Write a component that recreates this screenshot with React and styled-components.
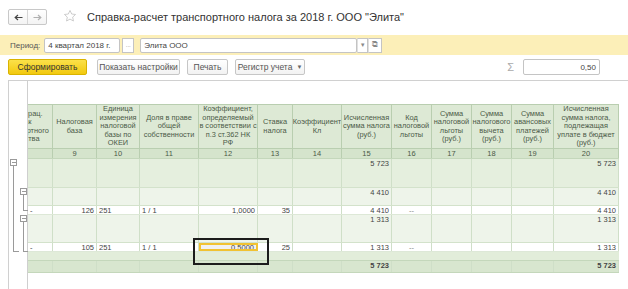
import React from "react";
import styled, { createGlobalStyle } from "styled-components";

const GlobalStyle = createGlobalStyle`
  html, body { margin: 0; padding: 0; background: #fff; }
  body { font-family: "Liberation Sans", Arial, sans-serif; color: #333; }
  * { box-sizing: border-box; }
`;

const Page = styled.div`
  position: relative;
  width: 628px;
  height: 289px;
  overflow: hidden;
  background: #fff;
  display: flex;
  flex-direction: column;
`;

// Title row
const TitleBar = styled.div`
  height: 37px;
  display: flex;
  align-items: flex-start;
  padding: 9px 0 0 8px;
`;

const NavGroup = styled.div`
  display: flex;
  width: 39px;
  height: 16px;
  border: 1px solid #c8c8c8;
  border-radius: 2px;
  background: linear-gradient(#fff, #f3f3f3);
`;

const NavButton = styled.div`
  flex: 1;
  display: flex;
  align-items: center;
  justify-content: center;
  color: ${(p) => (p.$disabled ? "#b0b0b0" : "#444")};
  & + & { border-left: 1px solid #d6d6d6; }
`;

const Star = styled.svg`
  margin: 0 0 0 16px;
  width: 14px;
  height: 14px;
`;

const Title = styled.div`
  margin-left: 10px;
  font-size: 11px;
  line-height: 16px;
  color: #333;
`;

// Parameters band
const ParamBar = styled.div`
  height: 21px;
  background: #fcefb8;
  display: flex;
  align-items: center;
  padding-left: 10px;
  font-size: 8px;
  color: #555;
`;

const Label = styled.span`
  margin-right: 4px;
`;

const Input = styled.div`
  height: 15px;
  width: ${(p) => p.$w}px;
  background: #fff;
  border: 1px solid #c4c4c4;
  border-radius: 2px;
  padding: 0 3px;
  display: flex;
  align-items: center;
  justify-content: ${(p) => (p.$right ? "flex-end" : "flex-start")};
  font-size: 8px;
  color: #444;
`;

const SmallBtn = styled.div`
  height: 15px;
  width: ${(p) => p.$w}px;
  margin-left: ${(p) => p.$ml || 0}px;
  background: #fff;
  border: 1px solid #c4c4c4;
  border-left-color: ${(p) => (p.$joined ? "#e0e0e0" : "#c4c4c4")};
  display: flex;
  align-items: center;
  justify-content: center;
  font-size: 6px;
  color: #888;
`;

// Command bar
const Toolbar = styled.div`
  margin-top: 4px;
  height: 17px;
  display: flex;
  align-items: center;
  padding: 0 28px 0 8px;
`;

const Button = styled.div`
  height: 16px;
  width: ${(p) => p.$w}px;
  margin-right: ${(p) => p.$mr || 7}px;
  border: 1px solid ${(p) => (p.$primary ? "#d9b300" : "#c6c6c6")};
  border-radius: 2px;
  background: ${(p) =>
    p.$primary ? "linear-gradient(#fbe14a, #f2c90f)" : "linear-gradient(#fff, #f2f2f2)"};
  display: flex;
  align-items: center;
  justify-content: center;
  gap: 4px;
  font-size: 8.5px;
  color: ${(p) => (p.$primary ? "#333" : "#555")};
  white-space: nowrap;
`;

const Caret = styled.span`
  font-size: 6px;
  color: #666;
`;

const Spacer = styled.div`
  flex: 1;
`;

const Sigma = styled.span`
  font-size: 11px;
  color: #aaa;
  margin-right: 9px;
`;

// Report
const Report = styled.div`
  flex: 1;
  margin: 5px 0 0 8px;
  border-top: 1px solid #d0d0d0;
  border-left: 1px solid #d0d0d0;
  display: flex;
`;

const Gutter = styled.div`
  width: 19px;
  border-right: 1px solid #cfcfcf;
  flex: none;
`;

const Grid = styled.div`
  padding-top: 23px;
  display: flex;
  flex-direction: column;
`;

const COLS = "25px 44px 43px 59px 59px 35px 49px 50px 40px 40px 40px 42px 65px";

const Row = styled.div`
  display: grid;
  grid-template-columns: ${COLS};
  height: ${(p) => p.$h}px;
  background: ${(p) => p.$bg};
  border-bottom: 1px solid ${(p) => p.$line || "#d3e2cb"};
`;

const HeadRow = styled(Row)`
  border-top: 1px solid #b9ceb0;
  border-bottom: 1px solid #b9ceb0;
`;

const HeadCell = styled.div`
  border-right: 1px solid #b9ceb0;
  display: flex;
  align-items: center;
  justify-content: center;
  text-align: center;
  font-size: 7.4px;
  line-height: 8.4px;
  color: #4b5a47;
  white-space: pre-line;
  overflow: hidden;
`;

const Clipped = styled.div`
  flex: none;
  width: 56px;
  margin-left: -32px;
  text-align: center;
`;

const NumCell = styled.div`
  border-right: 1px solid #b9ceb0;
  text-align: center;
  font-size: 7.5px;
  line-height: 9px;
  color: #4b5a47;
`;

const Cell = styled.div`
  border-right: ${(p) => (p.$plain ? "none" : "1px solid #cfdfc8")};
  font-size: 7.5px;
  line-height: 9px;
  padding: 0 2px;
  text-align: ${(p) => p.$align || "right"};
  font-weight: ${(p) => (p.$bold ? "bold" : "normal")};
  color: ${(p) => (p.$muted ? "#888" : "#444")};
  white-space: nowrap;
  overflow: hidden;
`;

const ActiveCell = styled(Cell)`
  border: 2px solid #f1c232;
  background: #f1f1f1;
  line-height: 6px;
`;

const Callout = styled.div`
  position: absolute;
  left: 193px;
  top: 238px;
  width: 76px;
  height: 27px;
  border: 2px solid #1c1c1c;
  pointer-events: none;
`;

const headers = [
  "Регистрац.\nзнак\nтранспортного\nсредства",
  "Налоговая\nбаза",
  "Единица\nизмерения\nналоговой\nбазы по\nОКЕИ",
  "Доля в праве\nобщей\nсобственности",
  "Коэффициент,\nопределяемый\nв соответствии с\nп.3 ст.362 НК\nРФ",
  "Ставка\nналога",
  "Коэффициент\nКл",
  "Исчисленная\nсумма налога\n(руб.)",
  "Код\nналоговой\nльготы",
  "Сумма\nналоговой\nльготы\n(руб.)",
  "Сумма\nналогового\nвычета\n(руб.)",
  "Сумма\nавансовых\nплатежей\n(руб.)",
  "Исчисленная\nсумма налога,\nподлежащая\nуплате в бюджет\n(руб.)",
];

const numbers = ["", "9", "10", "11", "12", "13", "14", "15", "16", "17", "18", "19", "20"];

const empty = (n) => Array.from({ length: n }, () => "");

const GroupRow = ({ h, bg, sum, bold, line }) => {
  const cells = empty(13);
  cells[7] = sum;
  cells[12] = sum;
  return (
    <Row $h={h} $bg={bg} $line={line}>
      {cells.map((c, i) => (
        <Cell key={i} $bold={bold}>
          {c}
        </Cell>
      ))}
    </Row>
  );
};

const DetailRow = ({ base, share, coef, rate, sum, active }) => (
  <Row $h={9} $bg="#fff" $line="#dde8d7">
    <Cell $align="left">-</Cell>
    <Cell>{base}</Cell>
    <Cell $align="left">251</Cell>
    <Cell $align="left">{share}</Cell>
    {active ? <ActiveCell>{coef}</ActiveCell> : <Cell>{coef}</Cell>}
    <Cell>{rate}</Cell>
    <Cell />
    <Cell>{sum}</Cell>
    <Cell $align="center" $muted>
      --
    </Cell>
    <Cell />
    <Cell />
    <Cell />
    <Cell>{sum}</Cell>
  </Row>
);

const Arrow = ({ left }) => (
  <svg width="9" height="7" viewBox="0 0 9 7">
    <path
      d={left ? "M8.5 3.5H1.5M4 1L1.2 3.5 4 6" : "M0.5 3.5H7.5M5 1l2.8 2.5L5 6"}
      fill="none"
      stroke="currentColor"
      strokeWidth="1.2"
    />
  </svg>
);

const Tree = () => (
  <svg width="19" height="204" viewBox="0 0 19 204">
    <g stroke="#9a9a9a" strokeWidth="1" fill="#fff" shapeRendering="crispEdges">
      <path d="M4.5 85 V170.5 H10" fill="none" />
      <path d="M14.5 114 V129.5 H19" fill="none" />
      <path d="M14.5 141 V170.5 H19" fill="none" />
      <rect x="1.5" y="78.5" width="6" height="6" />
      <rect x="11.5" y="107.5" width="6" height="6" />
      <rect x="11.5" y="134.5" width="6" height="6" />
      <path d="M3 81.5 H6.5 M13 110.5 H16.5 M13 137.5 H16.5" fill="none" />
    </g>
  </svg>
);

const App = () => (
  <Page>
    <GlobalStyle />
    <TitleBar>
      <NavGroup>
        <NavButton>
          <Arrow left />
        </NavButton>
        <NavButton $disabled>
          <Arrow />
        </NavButton>
      </NavGroup>
      <Star viewBox="0 0 24 24">
        <path
          d="M12 2.5l2.9 6.1 6.6.8-4.9 4.6 1.3 6.6L12 17.3l-5.9 3.3 1.3-6.6-4.9-4.6 6.6-.8z"
          fill="none"
          stroke="#bdbdbd"
          strokeWidth="1.3"
          strokeLinejoin="round"
        />
      </Star>
      <Title>Справка-расчет транспортного налога за 2018 г. ООО "Элита"</Title>
    </TitleBar>

    <ParamBar>
      <Label>Период:</Label>
      <Input $w={76}>4 квартал 2018 г.</Input>
      <SmallBtn $w={12} $ml={2}>...</SmallBtn>
      <Input $w={217} style={{ marginLeft: 6 }}>
        Элита ООО
      </Input>
      <SmallBtn $w={11} $joined>
        ▼
      </SmallBtn>
      <SmallBtn $w={14} $joined style={{ fontSize: 8 }}>
        ⧉
      </SmallBtn>
    </ParamBar>

    <Toolbar>
      <Button $primary $w={79} $mr={10}>
        Сформировать
      </Button>
      <Button $w={83}>Показать настройки</Button>
      <Button $w={41}>Печать</Button>
      <Button $w={70}>
        Регистр учета <Caret>▼</Caret>
      </Button>
      <Spacer />
      <Sigma>Σ</Sigma>
      <Input $w={77} $right style={{ height: 16 }}>
        0,50
      </Input>
    </Toolbar>

    <Report>
      <Gutter>
        <Tree />
      </Gutter>
      <Grid>
        <HeadRow $h={45} $bg="#dde9d5">
          {headers.map((h, i) => (
            <HeadCell key={i}>{i === 0 ? <Clipped>{h}</Clipped> : h}</HeadCell>
          ))}
        </HeadRow>
        <Row $h={10} $bg="#d5e4cc" $line="#c4d7bb">
          {numbers.map((n, i) => (
            <NumCell key={i}>{n}</NumCell>
          ))}
        </Row>
        <GroupRow h={29} bg="#e5efde" sum="5 723" />
        <GroupRow h={18} bg="#eef4ea" sum="4 410" />
        <DetailRow base="126" share="1 / 1" coef="1,0000" rate="35" sum="4 410" />
        <GroupRow h={28} bg="#eef4ea" sum="1 313" />
        <DetailRow base="105" share="1 / 1" coef="0,5000" rate="25" sum="1 313" active />
        <Row $h={9} $bg="#e2edda" $line="#c4d7bb" />
        <GroupRow h={12} bg="#d8e6cf" sum="5 723" bold line="#c4d7bb" />
      </Grid>
    </Report>

    <Callout />
  </Page>
);

export default App;
